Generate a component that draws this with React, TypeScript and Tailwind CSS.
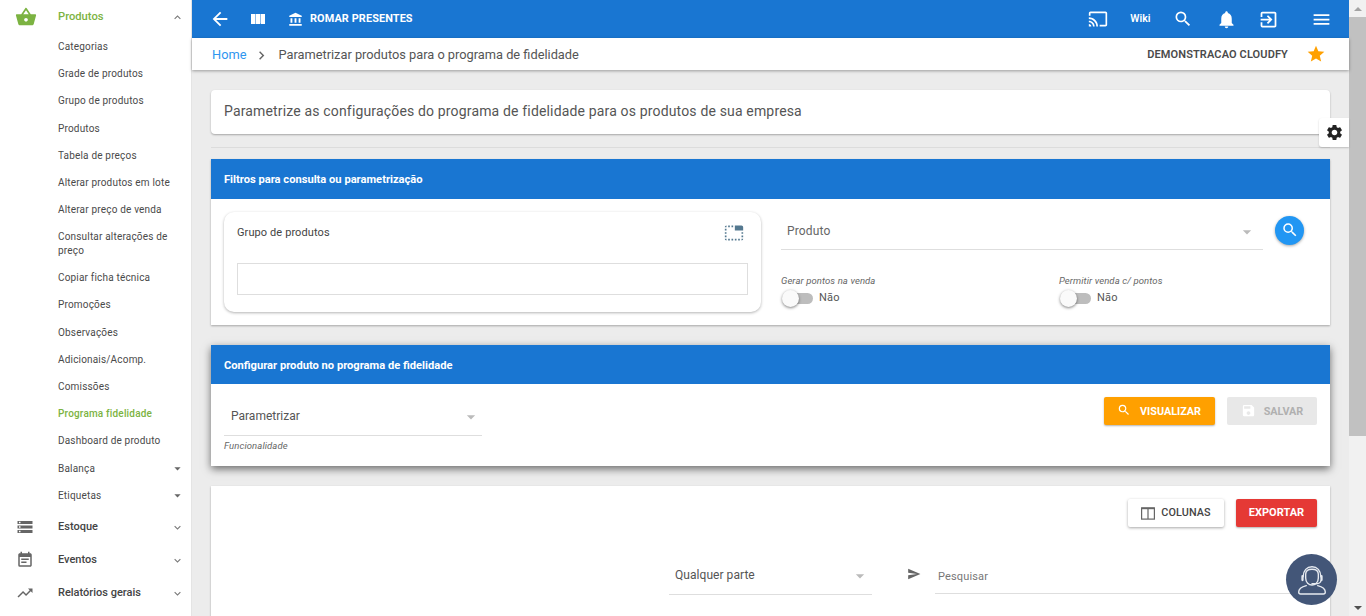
import React from "react";
import {
  MdArrowBack, MdAccountBalance, MdCast, MdSearch, MdNotifications, MdExitToApp, MdMenu, MdStar,
  MdSettings, MdShoppingBasket, MdStorage, MdEventNote, MdTrendingUp, MdExpandMore, MdExpandLess, MdArrowDropDown,
  MdSave, MdSend, MdChevronRight, MdTabUnselected,
} from "react-icons/md";

const subItems: { t: string; active?: boolean; caret?: boolean; h?: string }[] = [
  { t: "Categorias" },
  { t: "Grade de produtos" },
  { t: "Grupo de produtos" },
  { t: "Produtos" },
  { t: "Tabela de preços" },
  { t: "Alterar produtos em lote" },
  { t: "Alterar preço de venda" },
  { t: "Consultar alterações de preço", h: "h-[41px]" },
  { t: "Copiar ficha técnica" },
  { t: "Promoções" },
  { t: "Observações" },
  { t: "Adicionais/Acomp." },
  { t: "Comissões" },
  { t: "Programa fidelidade", active: true },
  { t: "Dashboard de produto" },
  { t: "Balança", caret: true },
  { t: "Etiquetas", caret: true },
];

function Sidebar() {
  return (
    <aside className="w-[192px] shrink-0 bg-white border-r border-[#e4e4e4] h-full overflow-hidden">
      <div className="flex items-center h-[33px] pt-[2px]">
        <div className="w-[58px] pl-[15px]"><MdShoppingBasket size={22} className="text-[#7cb342] -mt-[2px]" /></div>
        <span className="text-[11.2px] font-medium text-[#7cb342] flex-1">Produtos</span>
        <MdExpandLess size={13} className="text-[#777] mr-[7px]" />
      </div>
      <ul className="pt-[0.4px]">
        {subItems.map((s) => (
          <li
            key={s.t}
            className={`${s.h ?? "h-[27.2px]"} flex items-center pl-[58px] pr-[7px] text-[10px] tracking-[0.18px] leading-[14px] ${s.active ? "font-medium text-[#7cb342]" : "text-[#4a4a4a]"}`}
          >
            <span className="flex-1">{s.t}</span>
            {s.caret && <MdArrowDropDown size={15} className="text-[#666] -mr-[1px]" />}
          </li>
        ))}
      </ul>
      <div className="pt-[1.600px]">
        {[
          { t: "Estoque", I: MdStorage },
          { t: "Eventos", I: MdEventNote },
          { t: "Relatórios gerais", I: MdTrendingUp },
        ].map(({ t, I }) => (
          <div key={t} className="flex items-center h-[33px]">
            <div className="w-[58px] pl-[16px]"><I size={18} className="text-[#666]" /></div>
            <span className="text-[11px] font-medium text-[#444] flex-1">{t}</span>
            <MdExpandMore size={13} className="text-[#777] mr-[7px]" />
          </div>
        ))}
      </div>
    </aside>
  );
}

function Topbar() {
  return (
    <header className="h-[38px] shrink-0 bg-[#1976d2] text-white flex items-center">
      <MdArrowBack size={22} className="ml-[17px]" />
      <svg width="14" height="10" viewBox="0 0 14 10" className="ml-[20px]" fill="white">
        <path d="M0 0h4.300v10H0zM4.800 0h4.400v10H4.800zM9.700 0H14v10H9.700z" />
      </svg>
      <MdAccountBalance size={15} className="ml-[23px]" />
      <span className="ml-[7px] text-[10.9px] font-bold tracking-[0.1px]">ROMAR PRESENTES</span>
      <div className="flex-1" />
      <MdCast size={20} />
      <span className="ml-[22.5px] text-[10.5px] font-semibold">Wiki</span>
      <MdSearch size={20} className="ml-[22.5px]" />
      <MdNotifications size={21} className="ml-[22.5px]" />
      <MdExitToApp size={21} className="ml-[21px]" />
      <MdMenu size={21} className="ml-[32px] mr-[17.5px]" />
    </header>
  );
}

function Breadcrumb() {
  return (
    <div className="h-[32px] shrink-0 bg-white shadow-[0_1px_3px_rgba(0,0,0,0.35)] flex items-center relative z-10 pt-[2px]">
      <span className="ml-[20px] text-[12.8px] text-[#2f96ef]">Home</span>
      <MdChevronRight size={17} className="ml-[7px] text-[#666]" />
      <span className="ml-[8px] text-[12.8px] text-[#555]">Parametrizar produtos para o programa de fidelidade</span>
      <div className="flex-1" />
      <span className="text-[11px] font-semibold text-[#4a4a4a] tracking-[0.12px]">DEMONSTRACAO CLOUDFY</span>
      <MdStar size={20} className="ml-[18px] mr-[23px] -mt-[2px] text-[#ffa000]" />
    </div>
  );
}

function Caret({ className = "" }: { className?: string }) {
  return <MdArrowDropDown size={20} className={`text-[#bbb] ${className}`} />;
}

function Toggle({ label }: { label: string }) {
  return (
    <div className="w-[278px] shrink-0">
      <div className="text-[9.5px] italic text-[#666] tracking-[0.1px] leading-[12px]">{label}</div>
      <div className="flex items-center mt-[3px] h-[17px] pl-[2px]">
        <div className="relative w-[30px] h-[11px] rounded-full bg-[#bdbdbd]">
          <div className="absolute -left-px -top-[3px] w-[17px] h-[17px] rounded-full bg-[#fafafa] shadow-[0_1px_3px_rgba(0,0,0,0.5)]" />
        </div>
        <span className="ml-[6px] text-[11px] tracking-[0.2px] text-[#555]">Não</span>
      </div>
    </div>
  );
}

function CardHeader({ title, h }: { title: string; h: string }) {
  return (
    <div className={`${h} bg-[#1976d2] flex items-center px-[13px] text-[11.15px] font-bold text-white`}>{title}</div>
  );
}

function Content() {
  return (
    <div className="flex-1 overflow-hidden bg-[#ececec] px-[19px] pt-[20px]">
      <div className="h-[44px] bg-white rounded-[4px] shadow-[0_1px_2px_rgba(0,0,0,0.3)] flex items-center px-[13px] pb-[2px] text-[14px] tracking-[0.16px] text-[#555]">
        Parametrize as configurações do programa de fidelidade para os produtos de sua empresa
      </div>
      <hr className="mt-[13px] mb-[11px] border-t border-[#dcdcdc]" />

      <section className="bg-white h-[166px] shadow-[0_1px_2px_rgba(0,0,0,0.3)]">
        <CardHeader title="Filtros para consulta ou parametrização" h="h-[40px] pt-[2px]" />
        <div className="flex">
          <div className="shrink-0 ml-[13px] mt-[13px] w-[537px] h-[100px] rounded-[10px] bg-white shadow-[0_1px_3px_rgba(0,0,0,0.3)] px-[13px] pt-[11px]">
            <div className="flex items-start justify-between pr-[3px]">
              <span className="text-[11px] tracking-[0.1px] text-[#444] mt-[2px]">Grupo de produtos</span>
              <MdTabUnselected size={20} className="text-[#54788f] mr-px" />
            </div>
            <div className="mt-[20px] h-[32px] border border-[#dedede]" />
          </div>
          <div className="ml-[20px] mt-[13px] flex-1 min-w-0">
            <div className="flex items-start">
              <div className="w-[482px] h-[38px] border-b border-[#dedede] flex items-center pl-[6px] pr-[6px] justify-between">
                <span className="text-[12px] tracking-[0.15px] text-[#666]">Produto</span>
                <Caret className="mt-[3px]" />
              </div>
              <button className="ml-[12px] mt-[4px] w-[29px] h-[29px] rounded-full bg-[#2196f3] shadow-[0_1px_3px_rgba(0,0,0,0.35)] flex items-center justify-center text-white">
                <MdSearch size={18} className="-mt-[2px]" />
              </button>
            </div>
            <div className="flex mt-[25px]">
              <Toggle label="Gerar pontos na venda" />
              <Toggle label="Permitir venda c/ pontos" />
            </div>
          </div>
        </div>
      </section>

      <section className="mt-[20px] bg-white h-[121px] shadow-[0_3px_8px_rgba(0,0,0,0.55)]">
        <CardHeader title="Configurar produto no programa de fidelidade" h="h-[39px] pt-[3px]" />
        <div className="flex justify-between pl-[13px] pr-[13px]">
          <div className="w-[258px]">
            <div className="h-[52px] border-b border-[#dedede] flex items-center justify-between pl-[7px] pr-[1px] pt-[12px]">
              <span className="text-[12px] text-[#555]">Parametrizar</span>
              <Caret className="mt-[3px]" />
            </div>
            <div className="mt-[3px] text-[9.5px] italic text-[#666] tracking-[0.1px]">Funcionalidade</div>
          </div>
          <div className="flex mt-[13px] gap-[12px]">
            <button className="h-[28px] w-[111px] rounded-[2px] bg-[#ffa000] text-white text-[10.8px] font-bold shadow-[0_1px_2px_rgba(0,0,0,0.3)] flex items-center justify-center pt-[2px]">
              <MdSearch size={14} className="mr-[9px] -mt-[4px] -ml-[1px]" />VISUALIZAR
            </button>
            <button className="h-[28px] w-[90px] rounded-[2px] bg-[#e8e8e8] text-[#b0b0b0] text-[10.8px] font-bold flex items-center justify-center pt-[2px]">
              <MdSave size={15} className="mr-[8px] -mt-[3px] text-white" />SALVAR
            </button>
          </div>
        </div>
      </section>

      <section className="mt-[20px] bg-white h-[200px] shadow-[0_1px_2px_rgba(0,0,0,0.3)] px-[13px] pt-[13px]">
        <div className="flex justify-end gap-[12px]">
          <button className="h-[28px] w-[96px] rounded-[2px] bg-white text-[#444] text-[10.8px] font-medium tracking-[0.1px] shadow-[0_1px_3px_rgba(0,0,0,0.35)] flex items-center justify-center">
            <svg width="14" height="13" viewBox="0 0 14 13" className="mr-[6px]" fill="none" stroke="#666" strokeWidth="1.2">
              <rect x="0.6" y="0.9" width="12.8" height="11.2" />
              <path d="M7 1v11" />
              <path d="M0.6 1.4h12.8" strokeWidth="1.6" />
            </svg>
            COLUNAS
          </button>
          <button className="h-[28px] w-[81px] rounded-[2px] bg-[#e53935] text-white text-[11px] font-bold shadow-[0_1px_2px_rgba(0,0,0,0.3)]">EXPORTAR</button>
        </div>
        <div className="flex mt-[28px] ml-[445px]">
          <div className="w-[203px] h-[40px] border-b border-[#dedede] flex items-center justify-between pl-[6px] pr-[2px]">
            <span className="text-[12px] tracking-[0.05px] text-[#555]">Qualquer parte</span>
            <Caret className="mt-[2px]" />
          </div>
          <MdSend size={14} className="ml-[35px] mt-[12px] text-[#666]" />
          <div className="ml-[14px] flex-1 h-[39px] border-b border-[#dedede] flex items-center pl-[3px] pt-[6px] text-[11px] tracking-[0.15px] text-[#777]">Pesquisar</div>
        </div>
      </section>
    </div>
  );
}

function Scrollbar() {
  return (
    <div className="w-[17px] shrink-0 bg-[#f1f1f1] flex flex-col items-center">
      <div className="h-[17px] flex items-center justify-center">
        <div className="w-0 h-0 border-x-[4px] border-x-transparent border-b-[4px] border-b-[#a3a3a3]" />
      </div>
      <div className="w-full h-[419px] bg-[#c1c1c1]" />
      <div className="flex-1" />
      <div className="h-[17px] flex items-center justify-center">
        <div className="w-0 h-0 border-x-[4px] border-x-transparent border-t-[4px] border-t-[#505050]" />
      </div>
    </div>
  );
}

export default function App() {
  return (
    <div className="relative flex h-[616px] w-full overflow-hidden bg-[#ececec] font-['Roboto',sans-serif]">
      <Sidebar />
      <main className="flex-1 min-w-0 flex flex-col h-full">
        <Topbar />
        <Breadcrumb />
        <Content />
      </main>
      <Scrollbar />
      <div className="absolute left-[1319px] top-[118px] w-[30px] h-[29px] bg-white rounded-l-[3px] shadow-[0_1px_2px_rgba(0,0,0,0.2)] flex items-center justify-center z-20">
        <MdSettings size={19} className="text-[#222]" />
      </div>
      <div className="absolute left-[1286px] top-[554px] w-[51px] h-[51px] rounded-full bg-[#435678] flex items-center justify-center z-20">
        <svg width="38" height="38" viewBox="0 0 30 30" fill="none" stroke="#e6eaf0" strokeWidth="1.1" strokeLinecap="round">
          <path d="M8 12.500C8 7.500 11 4.500 15 4.500s7 3 7 8" />
          <path d="M10 10.500C10 8 12 6.500 15 6.500s5 1.500 5 4v3c0 3.500-2.500 5.500-5 5.500s-5-2-5-5.500z" />
          <path d="M7.500 12v3M22.500 12v3" strokeWidth="1.800" />
          <path d="M22 15.500c0 1.500-2 2.500-4 2.500h-3" />
          <path d="M10.500 19.500c-3 .8-6 2.500-6 5 0 1 .6 1.500 1.500 1.500h18c.9 0 1.500-.5 1.500-1.500 0-2.500-3-4.200-6-5" />
        </svg>
      </div>
    </div>
  );
}
